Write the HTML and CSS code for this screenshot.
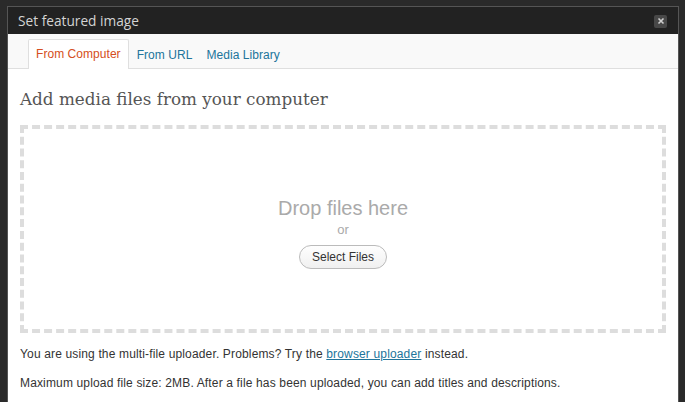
FILE: index.html
```html
<!DOCTYPE html>
<html>
<head>
<meta charset="utf-8">
<link rel="stylesheet" href="styles.css">
</head>
<body>
<div class="modal">
  <div class="titlebar">
    <span class="title">Set featured image</span>
    <span class="close">
      <svg width="12" height="12" viewBox="0 0 12 12"><path d="M3.5 3.5 L8.5 8.5 M8.5 3.5 L3.5 8.5" stroke="#d0d0d0" stroke-width="1.6" fill="none"/></svg>
    </span>
  </div>
  <div class="tabs">
    <span class="tab active">From Computer</span>
    <span class="tab">From URL</span>
    <span class="tab">Media Library</span>
  </div>
  <div class="content">
    <h3 class="heading">Add media files from your computer</h3>
    <div class="dropzone">
      <div class="drop-text">Drop files here</div>
      <div class="or">or</div>
      <button class="select">Select Files</button>
    </div>
    <p class="note">You are using the multi-file uploader. Problems? Try the <a href="#">browser uploader</a> instead.</p>
    <p class="note">Maximum upload file size: 2MB. After a file has been uploaded, you can add titles and descriptions.</p>
  </div>
</div>
</body>
</html>
```
FILE: styles.css
```css
html, body {
  margin: 0;
  padding: 0;
  height: 100%;
  overflow: hidden;
}
body {
  background: #2a2a2a;
  font-family: "Liberation Sans", Arial, sans-serif;
  padding: 6px 6px 0 7px;
  box-sizing: border-box;
}
.modal {
  width: 672px;
  height: 420px;
  background: #fff;
  border: 1px solid #555;
  border-bottom: none;
  box-sizing: border-box;
}
.titlebar {
  height: 27px;
  background: #222;
  display: flex;
  align-items: center;
  justify-content: space-between;
  padding: 0 11px 0 10px;
}
.title {
  color: #d4d4d4;
  font-family: "Open Sans", sans-serif;
  font-size: 13.7px;
}
.close {
  width: 13px;
  height: 13px;
  background: #484848;
  border-radius: 2px;
  display: flex;
  align-items: center;
  justify-content: center;
  margin-top: 1px;
}
.tabs {
  height: 35px;
  background: #f9f9f9;
  border-bottom: 1px solid #dfdfdf;
  box-sizing: border-box;
  display: flex;
  align-items: flex-end;
  padding-left: 20px;
}
.tab {
  font-size: 12px;
  letter-spacing: 0.05px;
  color: #21759b;
  padding: 0 7px;
  height: 28px;
  line-height: 28px;
  box-sizing: border-box;
  margin-bottom: -1px;
}
.tab.active {
  color: #d54e21;
  background: #fff;
  border: 1px solid #dfdfdf;
  border-bottom: none;
  height: 30px;
  line-height: 28px;
  border-radius: 2px 2px 0 0;
  margin-right: 1px;
}
.content {
  padding: 0 12px 0 12px;
}
.heading {
  margin: 18px 0 0 0;
  font-family: "DejaVu Serif", Georgia, serif;
  font-weight: normal;
  font-size: 16.8px;
  line-height: 24px;
  color: #555;
  height: 38px;
}
.dropzone {
  height: 208px;
  box-sizing: border-box;
  border: 4px dashed #ddd;
  display: flex;
  flex-direction: column;
  align-items: center;
  padding-top: 67px;
}
.drop-text {
  font-size: 20px;
  line-height: 24px;
  color: #aaa;
}
.or {
  font-size: 13px;
  line-height: 18px;
  color: #aaa;
  margin-top: 1px;
}
.select {
  margin-top: 6px;
  height: 24px;
  width: 88px;
  border: 1px solid #bbb;
  border-radius: 12px;
  background: linear-gradient(#fefefe, #f0f0f0);
  font-family: "Liberation Sans", Arial, sans-serif;
  font-size: 12px;
  color: #333;
  padding: 0;
}
.note {
  margin: 11px 0 0 0;
  font-size: 12px;
  letter-spacing: 0.15px;
  line-height: 18px;
  color: #333;
}
.note:first-of-type {
  margin-top: 12px;
}
.note a {
  color: #21759b;
}
```
